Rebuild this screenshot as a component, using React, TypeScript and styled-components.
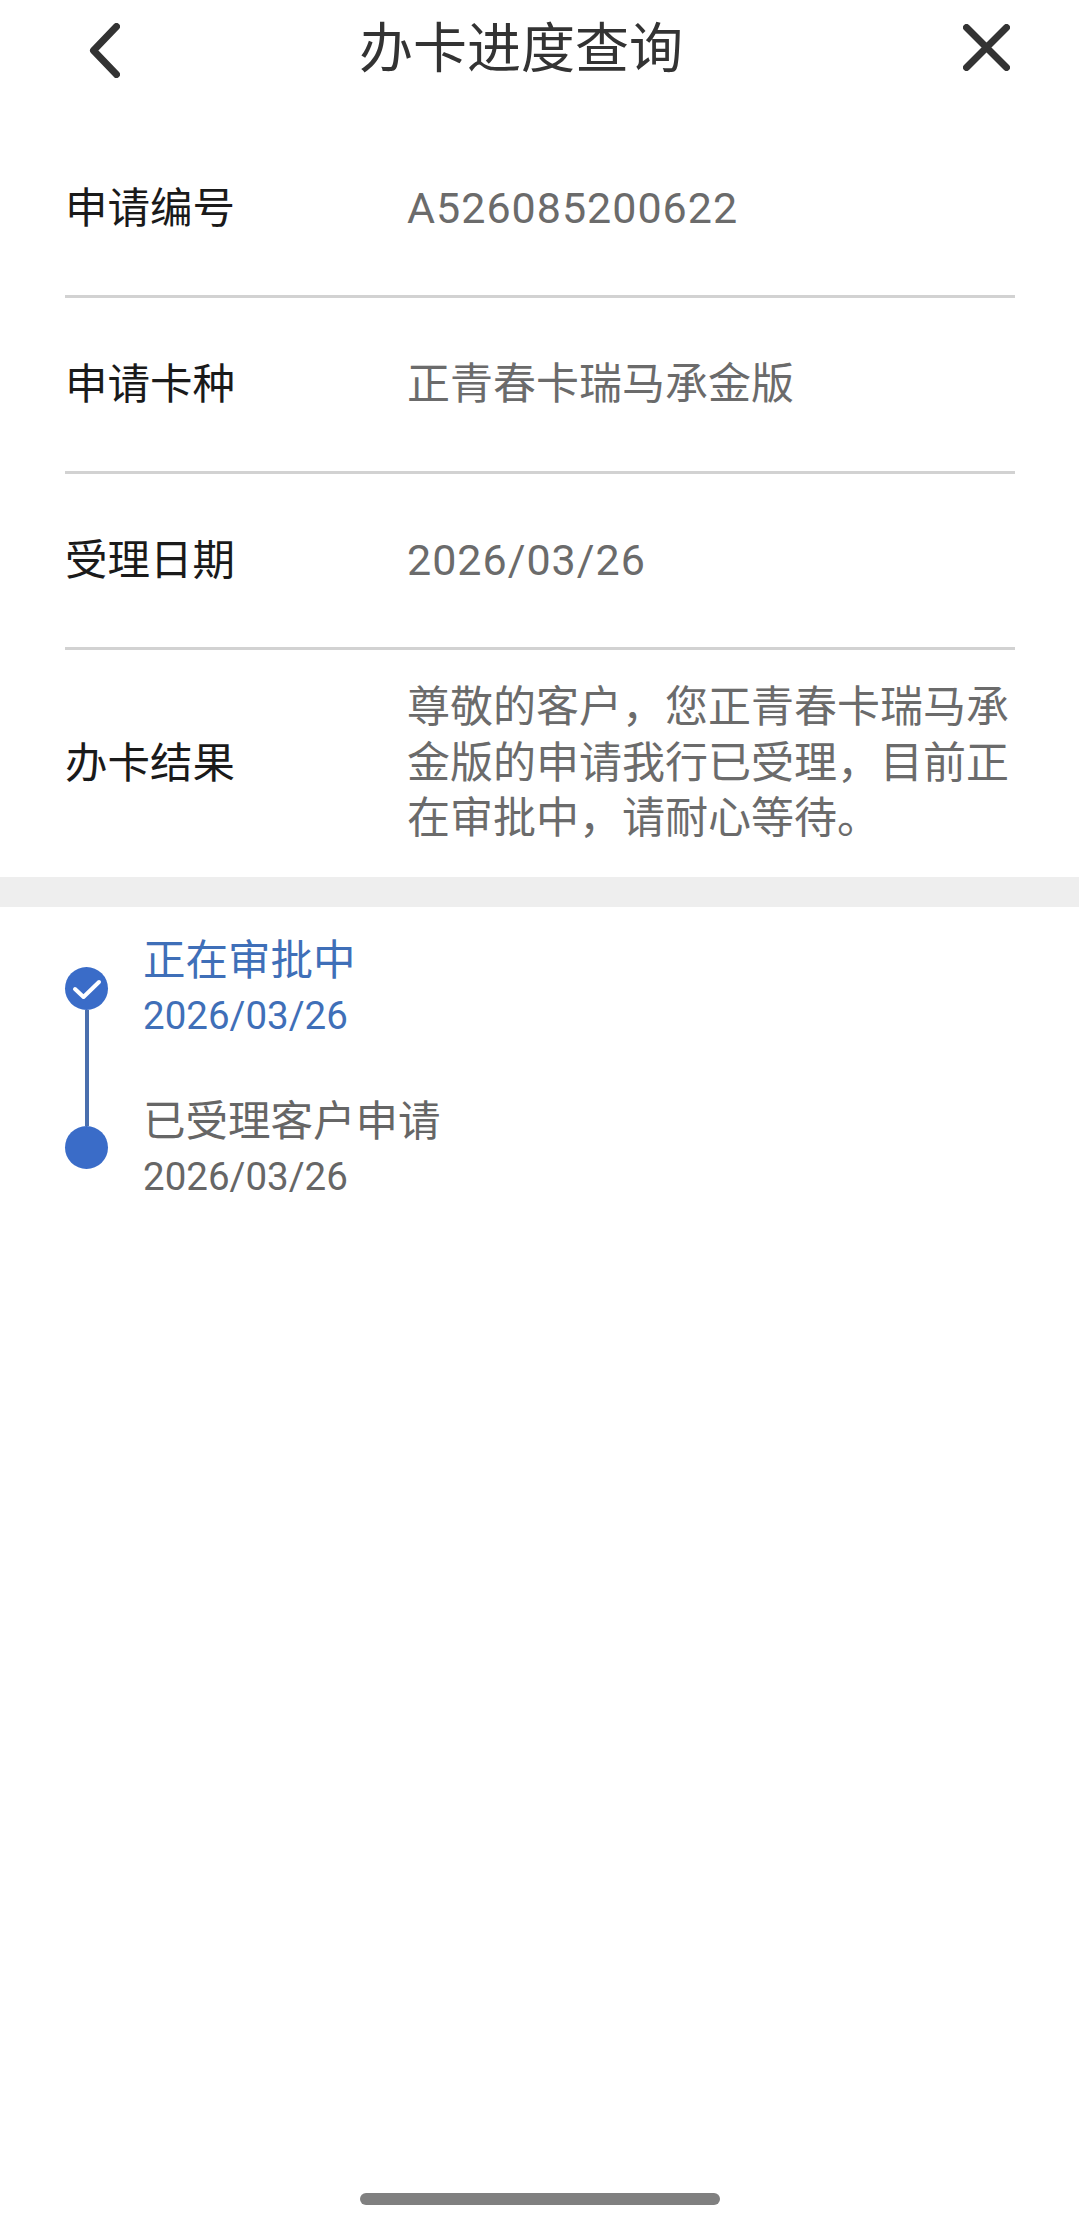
import React from 'react';
import styled, { createGlobalStyle } from 'styled-components';

const GlobalStyle = createGlobalStyle`
  html, body {
    margin: 0;
    padding: 0;
    background: #fff;
  }
  body {
    font-family: Roboto, "Noto Sans CJK SC", sans-serif;
  }
`;

const Page = styled.div`
  width: 1079px;
  height: 2226px;
  display: flex;
  flex-direction: column;
  overflow: hidden;
  background: #fff;
`;

const Header = styled.header`
  height: 100px;
  display: flex;
  align-items: center;
  padding: 0 69px 0 89px;
`;

const HeaderTitle = styled.h1`
  margin: 0 0 0 239px;
  font-size: 54px;
  font-weight: 400;
  line-height: 100px;
  color: #333;
`;

const CloseButton = styled.svg`
  margin: 0 0 5px auto;
  display: block;
`;

const InfoList = styled.section`
  margin-top: 22px;
`;

const InfoRow = styled.div<{ $last?: boolean }>`
  margin: 0 64px 0 65px;
  display: flex;
  align-items: center;
  min-height: ${p => (p.$last ? '227px' : '173px')};
  border-bottom: ${p => (p.$last ? 'none' : '3px solid #d2d2d2')};
`;

const Label = styled.div`
  flex: 0 0 342px;
  font-size: 42.5px;
  line-height: 55.5px;
  color: #1a1a1a;
`;

const Value = styled.div<{ $latin?: boolean }>`
  flex: 1;
  font-size: 43px;
  line-height: 55.5px;
  letter-spacing: ${p => (p.$latin ? '1px' : '0')};
  color: #6b6b6b;
`;

const Band = styled.div`
  height: 30px;
  background: #eeeeee;
`;

const Timeline = styled.section`
  display: flex;
  padding: 26px 0 0 65px;
`;

const Rail = styled.div`
  width: 43px;
  margin: 34px 35px 0 0;
  display: flex;
  flex-direction: column;
  align-items: center;
`;

const Dot = styled.div`
  width: 43px;
  height: 43px;
  flex: none;
  border-radius: 50%;
  background: #3a6cc8;
  display: flex;
  align-items: center;
  justify-content: center;
`;

const RailLine = styled.div`
  width: 4px;
  height: 116px;
  background: #4a6fae;
`;

const Steps = styled.div`
  display: flex;
  flex-direction: column;
  gap: 51px;
`;

const Step = styled.div<{ $active?: boolean }>`
  color: ${p => (p.$active ? '#3f6fb8' : '#666')};
`;

const StepTitle = styled.div`
  font-size: 42.5px;
  line-height: 55px;
`;

const StepDate = styled.div`
  font-size: 38.5px;
  line-height: 55px;
`;

const HomeBar = styled.div`
  width: 360px;
  height: 12px;
  margin: auto auto 21px;
  border-radius: 6px;
  background: #808080;
`;

const rows = [
  { label: '申请编号', value: 'A526085200622', latin: true },
  { label: '申请卡种', value: '正青春卡瑞马承金版' },
  { label: '受理日期', value: '2026/03/26', latin: true },
  { label: '办卡结果', value: '尊敬的客户，您正青春卡瑞马承金版的申请我行已受理，目前正在审批中，请耐心等待。' }
];

const App: React.FC = () => {
  return (
    <Page>
      <GlobalStyle />
      <Header>
        <svg width="31" height="55" viewBox="0 0 31 55" fill="none">
          <path d="M27.5 3.5 L4.5 27.5 L27.5 51.5" stroke="#333" strokeWidth="7" strokeLinecap="round" strokeLinejoin="round" />
        </svg>
        <HeaderTitle>办卡进度查询</HeaderTitle>
        <CloseButton width="47" height="47" viewBox="0 0 47 47" fill="none">
          <path d="M3.5 3.5 L43.5 43.5 M43.5 3.5 L3.5 43.5" stroke="#333" strokeWidth="7" strokeLinecap="round" />
        </CloseButton>
      </Header>

      <InfoList>
        {rows.map((row, i) => (
          <InfoRow key={row.label} $last={i === rows.length - 1}>
            <Label>{row.label}</Label>
            <Value $latin={row.latin}>{row.value}</Value>
          </InfoRow>
        ))}
      </InfoList>

      <Band />

      <Timeline>
        <Rail>
          <Dot>
            <svg width="30" height="22" viewBox="0 0 30 22" fill="none">
              <path d="M3 11 L11.5 19 L27 4" stroke="#fff" strokeWidth="4" strokeLinecap="round" strokeLinejoin="round" />
            </svg>
          </Dot>
          <RailLine />
          <Dot />
        </Rail>
        <Steps>
          <Step $active>
            <StepTitle>正在审批中</StepTitle>
            <StepDate>2026/03/26</StepDate>
          </Step>
          <Step>
            <StepTitle>已受理客户申请</StepTitle>
            <StepDate>2026/03/26</StepDate>
          </Step>
        </Steps>
      </Timeline>

      <HomeBar />
    </Page>
  );
};

export default App;
